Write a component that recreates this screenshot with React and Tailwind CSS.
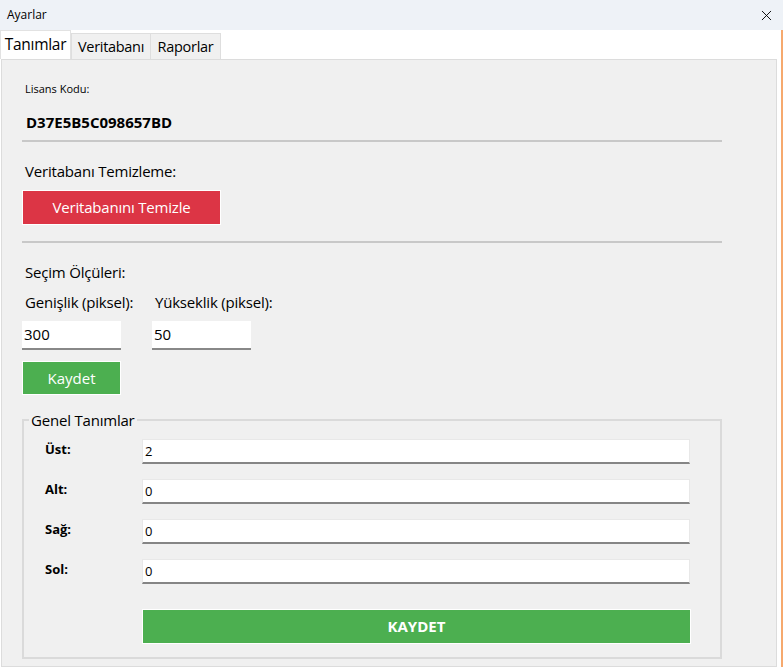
import { X } from "lucide-react";

function Field({ label, value }) {
  return (
    <div className="flex items-center h-[40px]">
      <div className="w-[118px] pl-[21px] text-[13px] font-bold text-black -mt-[2px]">
        {label}
      </div>
      <div className="w-[548px] h-[25px] bg-white border border-[#e8e8e8] border-b-2 border-b-[#858585] flex items-center pl-[2px] text-[13px] text-black pt-[2px]">
        {value}
      </div>
    </div>
  );
}

export default function App() {
  return (
    <div
      className="w-[783px] h-[667px] bg-white flex flex-col overflow-hidden"
      style={{ fontFamily: '"Open Sans", "Noto Sans", sans-serif' }}
    >
      {/* title bar */}
      <div className="h-[30px] bg-[#eef2f7] flex items-center justify-between pl-[7px] pr-[8px] shrink-0">
        <span className="text-[12px] text-black">Ayarlar</span>
        <X size={17} strokeWidth={1.3} className="text-black" />
      </div>

      <div className="flex flex-1 min-h-0">
        <div className="flex flex-col flex-1 min-w-0">
          {/* tabs */}
          <div className="h-[29px] flex items-end shrink-0 bg-white">
            <div className="w-[71px] h-[29px] flex items-center justify-center bg-white border-t border-l border-r border-[#e2e2e2] text-[15.5px] text-black tracking-[-0.3px]">
              Tanımlar
            </div>
            <div className="w-[80px] h-[26px] flex items-center justify-center bg-[#f0f0f0] border border-b-0 border-[#dedede] text-[14.5px] text-black tracking-[-0.3px]">
              Veritabanı
            </div>
            <div className="w-[70px] h-[26px] flex items-center justify-center bg-[#f0f0f0] border border-b-0 border-l-0 border-[#dedede] text-[14.5px] text-black tracking-[-0.3px]">
              Raporlar
            </div>
          </div>

          {/* panel */}
          <div className="flex-1 bg-[#f0f0f0] border border-[#dcdcdc] ml-[1px] mr-[4px] pl-[20px] pt-[21px] flex flex-col">
            <div className="pl-[3px] text-[11px] text-black leading-[16px]">Lisans Kodu:</div>
            <div className="pl-[4px] mt-[15px] text-[15px] font-bold text-black leading-[20px]">
              D37E5B5C098657BD
            </div>
            <div className="w-[700px] h-[2px] bg-[#c8c8c8] mt-[8px]"></div>

            <div className="pl-[3px] mt-[19px] text-[15px] text-black leading-[20px] tracking-[-0.2px]">
              Veritabanı Temizleme:
            </div>
            <button className="mt-[9px] w-[199px] h-[35px] bg-[#dc3545] border border-white text-white text-[15px] tracking-[-0.2px]">
              Veritabanını Temizle
            </button>
            <div className="w-[700px] h-[2px] bg-[#c8c8c8] mt-[16px]"></div>

            <div className="pl-[3px] mt-[19px] text-[15px] text-black leading-[20px] tracking-[-0.2px]">
              Seçim Ölçüleri:
            </div>
            <div className="flex mt-[10px] text-[15px] text-black leading-[20px] tracking-[-0.2px]">
              <div className="pl-[3px] w-[133px]">Genişlik (piksel):</div>
              <div>Yükseklik (piksel):</div>
            </div>
            <div className="flex mt-[9px] gap-[31px]">
              <div className="w-[99px] h-[29px] bg-white border-b-2 border-[#888888] flex items-center pl-[2px] text-[15px] text-black">
                300
              </div>
              <div className="w-[99px] h-[29px] bg-white border-b-2 border-[#888888] flex items-center pl-[2px] text-[15px] text-black">
                50
              </div>
            </div>
            <button className="mt-[11px] w-[99px] h-[34px] bg-[#4caf50] border border-white text-white text-[15px]">
              Kaydet
            </button>

            {/* group box */}
            <fieldset className="mt-[16px] w-[700px] h-[248px] border-2 border-[#dadada] pt-[2px] m-0 px-0">
              <legend className="ml-[5px] px-[2px] text-[15px] text-black leading-[18px] tracking-[-0.2px]">
                Genel Tanımlar
              </legend>
              <div className="flex flex-col">
                <Field label="Üst:" value="2" />
                <Field label="Alt:" value="0" />
                <Field label="Sağ:" value="0" />
                <Field label="Sol:" value="0" />
              </div>
              <div className="pl-[118px] mt-[18px]">
                <button className="w-[549px] h-[35px] bg-[#4caf50] border border-white text-white text-[15px] font-bold">
                  KAYDET
                </button>
              </div>
            </fieldset>
          </div>
        </div>
        <div className="w-[2px] bg-[#f6a96e]"></div>
      </div>
    </div>
  );
}
